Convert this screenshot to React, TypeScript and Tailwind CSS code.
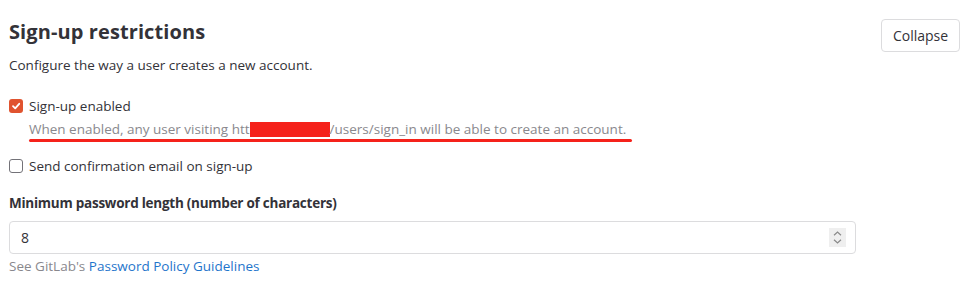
export default function App() {
  return (
    <div
      className="w-[974px] h-[294px] bg-white text-[#333238] overflow-hidden"
      style={{ fontFamily: '"Open Sans", "Noto Sans", sans-serif' }}
    >
      <div className="flex justify-between pl-[9px] pr-[14px] pt-[19px]">
        <div className="flex flex-col">
          <h2 className="text-[20px] leading-[24px] font-bold mt-[1px] tracking-[0.1px]">Sign-up restrictions</h2>
          <p className="text-[13.5px] leading-[20px] mt-[11px]">Configure the way a user creates a new account.</p>
        </div>
        <button className="h-[33px] w-[79px] border border-[#dcdcde] rounded-[4px] text-[14px] text-[#333238] bg-white">
          Collapse
        </button>
      </div>

      <div className="pl-[9px] mt-[21px]">
        <div className="flex items-center gap-[6px] h-[20px]">
          <span className="w-[14px] h-[14px] rounded-[3px] bg-[#e0532f] flex items-center justify-center">
            <svg width="10" height="10" viewBox="0 0 10 10">
              <path d="M2 5.2 L4.2 7.4 L8.2 2.8" stroke="white" strokeWidth="1.8" fill="none" strokeLinecap="round" strokeLinejoin="round" />
            </svg>
          </span>
          <span className="text-[13.5px] leading-[20px]">Sign-up enabled</span>
        </div>
        <div className="pl-[20px] mt-[3px] w-fit">
          <p className="text-[13.5px] leading-[20px] text-[#89888d] flex items-center whitespace-nowrap">
            <span>When enabled, any user visiting htt</span>
            <span className="inline-block w-[80px] h-[15px] bg-[#f5221b]"></span>
            <span>/users/sign_in will be able to create an account.</span>
          </p>
          <div className="h-[3px] bg-[#f5221b] w-[603px] rounded-full"></div>
        </div>

        <div className="flex items-center gap-[6px] h-[20px] mt-[14px]">
          <span className="w-[14px] h-[14px] rounded-[3px] border border-[#737278] bg-white"></span>
          <span className="text-[13.5px] leading-[20px]">Send confirmation email on sign-up</span>
        </div>

        <p className="text-[13.5px] leading-[20px] font-bold mt-[17px] tracking-[-0.25px]">Minimum password length (number of characters)</p>

        <div className="mt-[8px] w-[847px] h-[33px] border border-[#dcdcde] rounded-[4px] flex items-center justify-between pl-[11px] pr-[9px]">
          <span className="text-[14px]">8</span>
          <span className="w-[17px] h-[19px] bg-[#efefef] flex flex-col items-center justify-center gap-[3px]">
            <svg width="9" height="5" viewBox="0 0 9 5">
              <path d="M1 4.2 L4.5 1 L8 4.2" stroke="#8a8a8a" strokeWidth="1.2" fill="none" />
            </svg>
            <svg width="9" height="5" viewBox="0 0 9 5">
              <path d="M1 0.8 L4.5 4 L8 0.8" stroke="#8a8a8a" strokeWidth="1.2" fill="none" />
            </svg>
          </span>
        </div>

        <p className="text-[13.5px] leading-[20px] mt-[2px] text-[#89888d]">
          See GitLab's <a className="text-[#1f75cb]">Password Policy Guidelines</a>
        </p>
      </div>
    </div>
  );
}
